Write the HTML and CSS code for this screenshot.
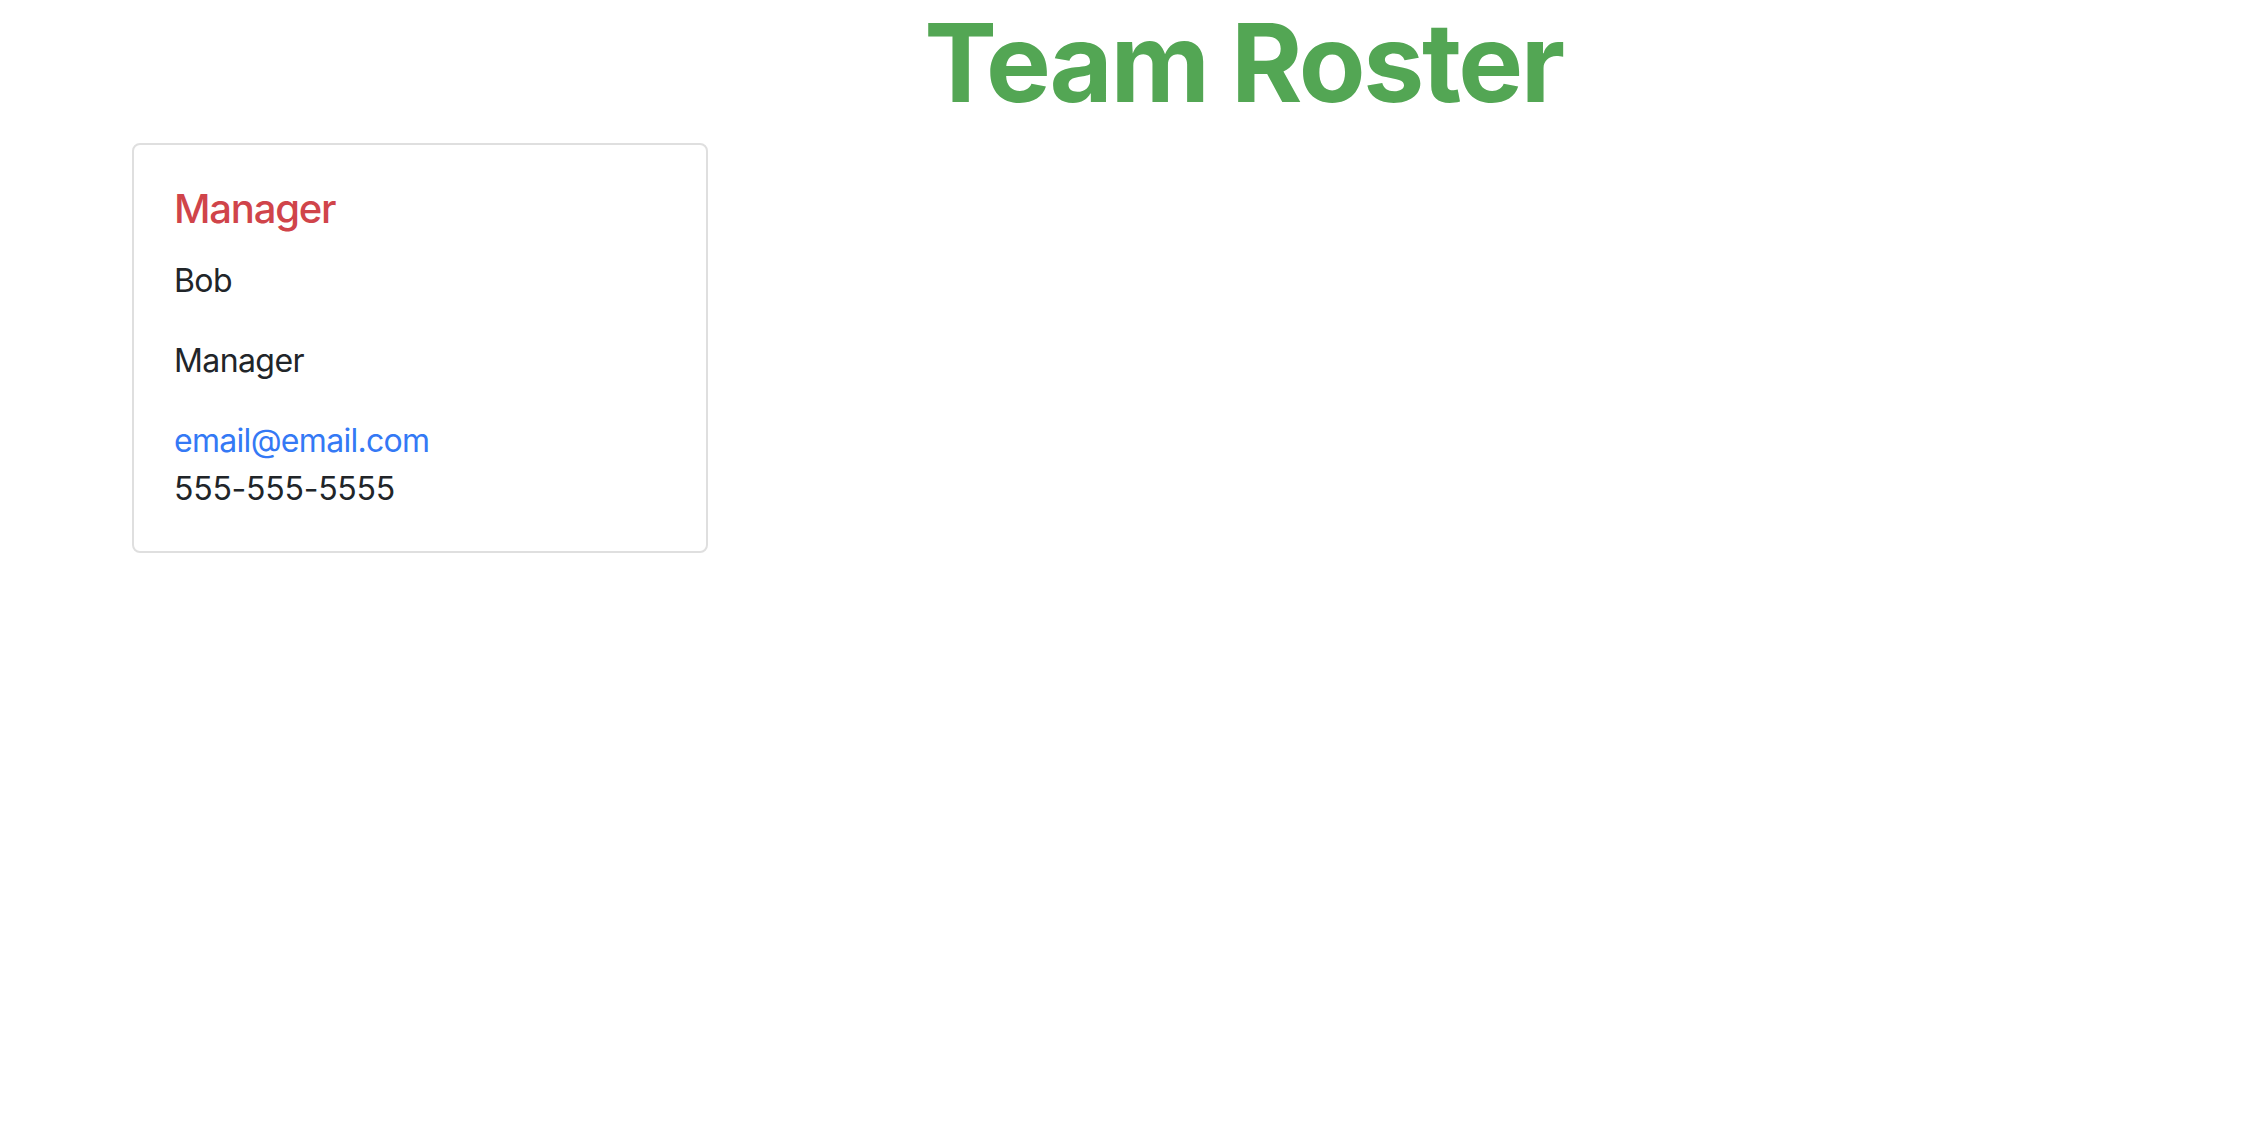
FILE: index.html
```html
<!DOCTYPE html>
<html lang="en">
<head>
<meta charset="utf-8">
<title>Team Roster</title>
<link rel="stylesheet" href="styles.css">
</head>
<body>
  <header class="page-header">
    <h1 class="title">Team Roster</h1>
  </header>
  <main class="roster">
    <div class="card">
      <h5 class="card-title">Manager</h5>
      <p class="card-text">Bob</p>
      <p class="card-text">Manager</p>
      <a class="card-link" href="mailto:email@email.com">email@email.com</a>
      <p class="card-text phone">555-555-5555</p>
    </div>
  </main>
</body>
</html>
```
FILE: styles.css
```css
html, body {
  margin: 0;
  padding: 0;
  background: #ffffff;
}

body {
  font-family: Inter, "Noto Sans", "Liberation Sans", sans-serif;
  color: #212529;
}

.page-header {
  padding-top: 2px;
  padding-left: 245px;
  margin-bottom: 20px;
}

.title {
  margin: 0;
  text-align: center;
  font-size: 109px;
  line-height: 121px;
  font-weight: 700;
  color: #53a654;
  letter-spacing: -2.4px;
}

.roster {
  display: flex;
  padding-left: 132px;
}

.card {
  box-sizing: border-box;
  width: 576px;
  border: 2px solid #dfdfdf;
  border-radius: 8px;
  padding: 40px 40px 38px;
  display: flex;
  flex-direction: column;
  align-items: flex-start;
}

.card-title {
  margin: 0 0 24px;
  font-size: 40px;
  line-height: 48px;
  font-weight: 500;
  color: #d0444a;
  letter-spacing: -1.2px;
}

.card-text {
  margin: 0 0 32px;
  font-size: 32px;
  line-height: 48px;
  letter-spacing: -0.6px;
}

.card-text.phone {
  margin-bottom: 0;
  letter-spacing: -0.25px;
}

.card-link {
  font-size: 32px;
  line-height: 48px;
  color: #3479f5;
  text-decoration: none;
  letter-spacing: -0.7px;
}
```
